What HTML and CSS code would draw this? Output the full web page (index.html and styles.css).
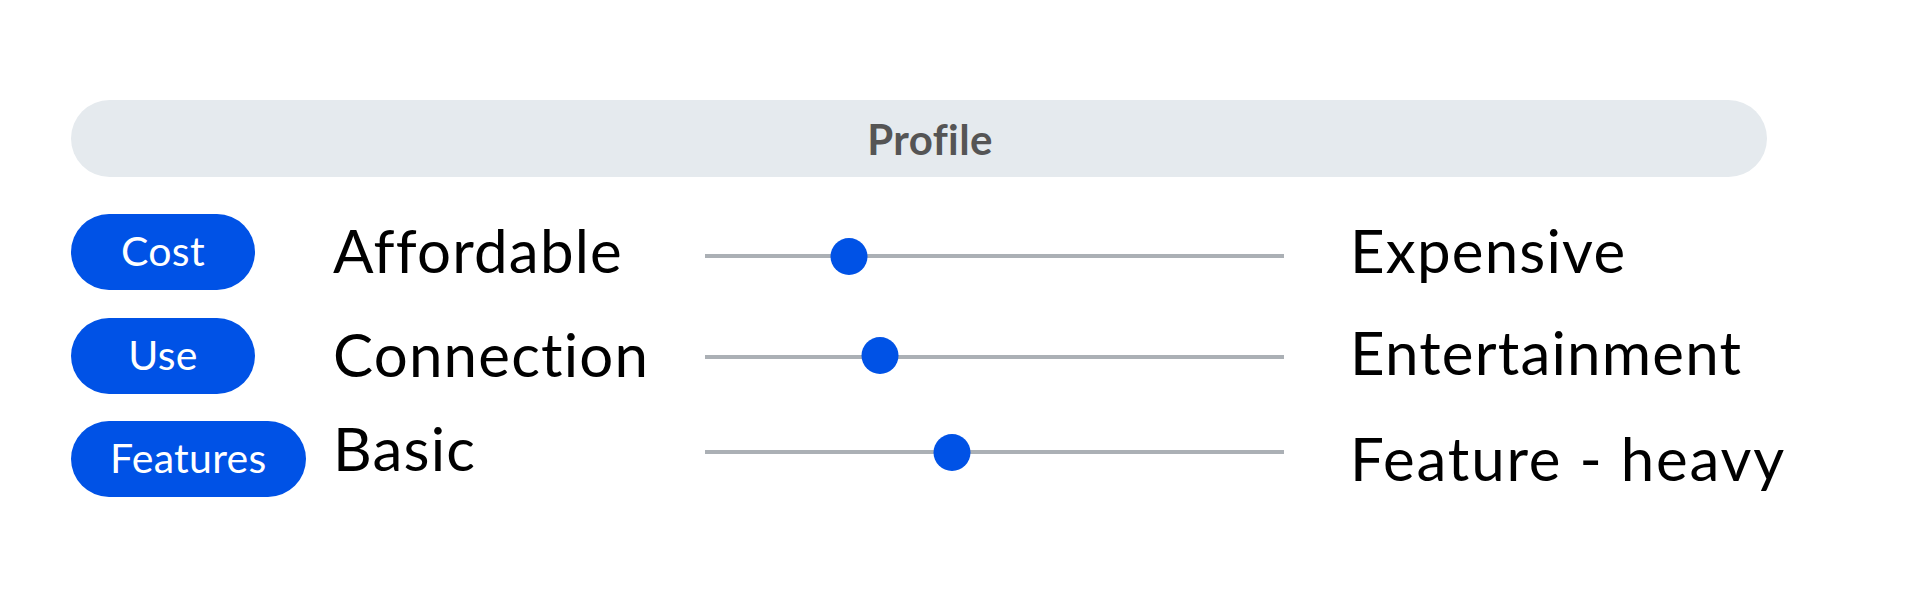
FILE: index.html
```html
<!DOCTYPE html>
<html lang="en">
<head>
<meta charset="utf-8">
<title>Profile</title>
<link rel="stylesheet" href="styles.css">
</head>
<body>
<main class="profile">
  <div class="profile__header">Profile</div>
  <div class="profile__rows">
    <div class="row row--cost">
      <span class="tag">Cost</span>
      <span class="label">Affordable</span>
      <div class="slider"><div class="slider__track"></div><span class="slider__knob" style="left:24.8%"></span></div>
      <span class="label label--right">Expensive</span>
    </div>
    <div class="row row--use">
      <span class="tag">Use</span>
      <span class="label">Connection</span>
      <div class="slider"><div class="slider__track"></div><span class="slider__knob" style="left:30.3%"></span></div>
      <span class="label label--right">Entertainment</span>
    </div>
    <div class="row row--features">
      <span class="tag">Features</span>
      <span class="label">Basic</span>
      <div class="slider"><div class="slider__track"></div><span class="slider__knob" style="left:42.7%"></span></div>
      <span class="label label--right">Feature - heavy</span>
    </div>
  </div>
</main>
</body>
</html>
```
FILE: styles.css
```css
* { box-sizing: border-box; }
html, body { margin: 0; background: #ffffff; }
body { font-family: Lato, "Open Sans", sans-serif; }

.profile {
  width: 1767px;
  padding: 100px 0 0 71px;
}

.profile__header {
  height: 77px;
  border-radius: 38.5px;
  background: #e5eaee;
  display: flex;
  align-items: center;
  justify-content: center;
  padding-left: 22px;
  font-weight: 700;
  font-size: 42px;
  letter-spacing: 0.4px;
  color: #555555;
}

.profile__rows {
  margin-top: 37px;
  display: flex;
  flex-direction: column;
  gap: 27.5px;
}

.row {
  display: grid;
  grid-template-columns: 262px 372px 579px 1fr;
  height: 76px;
  align-items: start;
}

.tag {
  justify-self: start;
  height: 76px;
  min-width: 184px;
  padding: 0 39px 3px;
  border-radius: 38px;
  background: #0052e6;
  color: #ffffff;
  font-size: 41px;
  letter-spacing: 0.3px;
  display: flex;
  align-items: center;
  justify-content: center;
}

.label {
  font-size: 60px;
  line-height: 72px;
  letter-spacing: 1.2px;
  color: #000000;
  white-space: nowrap;
}

.label--right { padding-left: 66px; }

.slider {
  position: relative;
  height: 76px;
  padding-top: 39.5px;
}

.slider__track {
  height: 4px;
  background: #abb0b5;
}

.slider__knob {
  position: absolute;
  top: 24px;
  width: 37px;
  height: 37px;
  border-radius: 50%;
  background: #0052e6;
  transform: translateX(-50%);
}

.row--use .slider { padding-top: 37px; }
.row--use .slider__knob { top: 19.5px; }
.row--use .label--right { margin-top: -2px; }

.row--features .label:not(.label--right) { margin-top: -9px; }
.row--features .label--right { margin-top: 1px; letter-spacing: 1.8px; }
.row--features .slider { padding-top: 29px; }
.row--features .slider__knob { top: 12.5px; }
```
